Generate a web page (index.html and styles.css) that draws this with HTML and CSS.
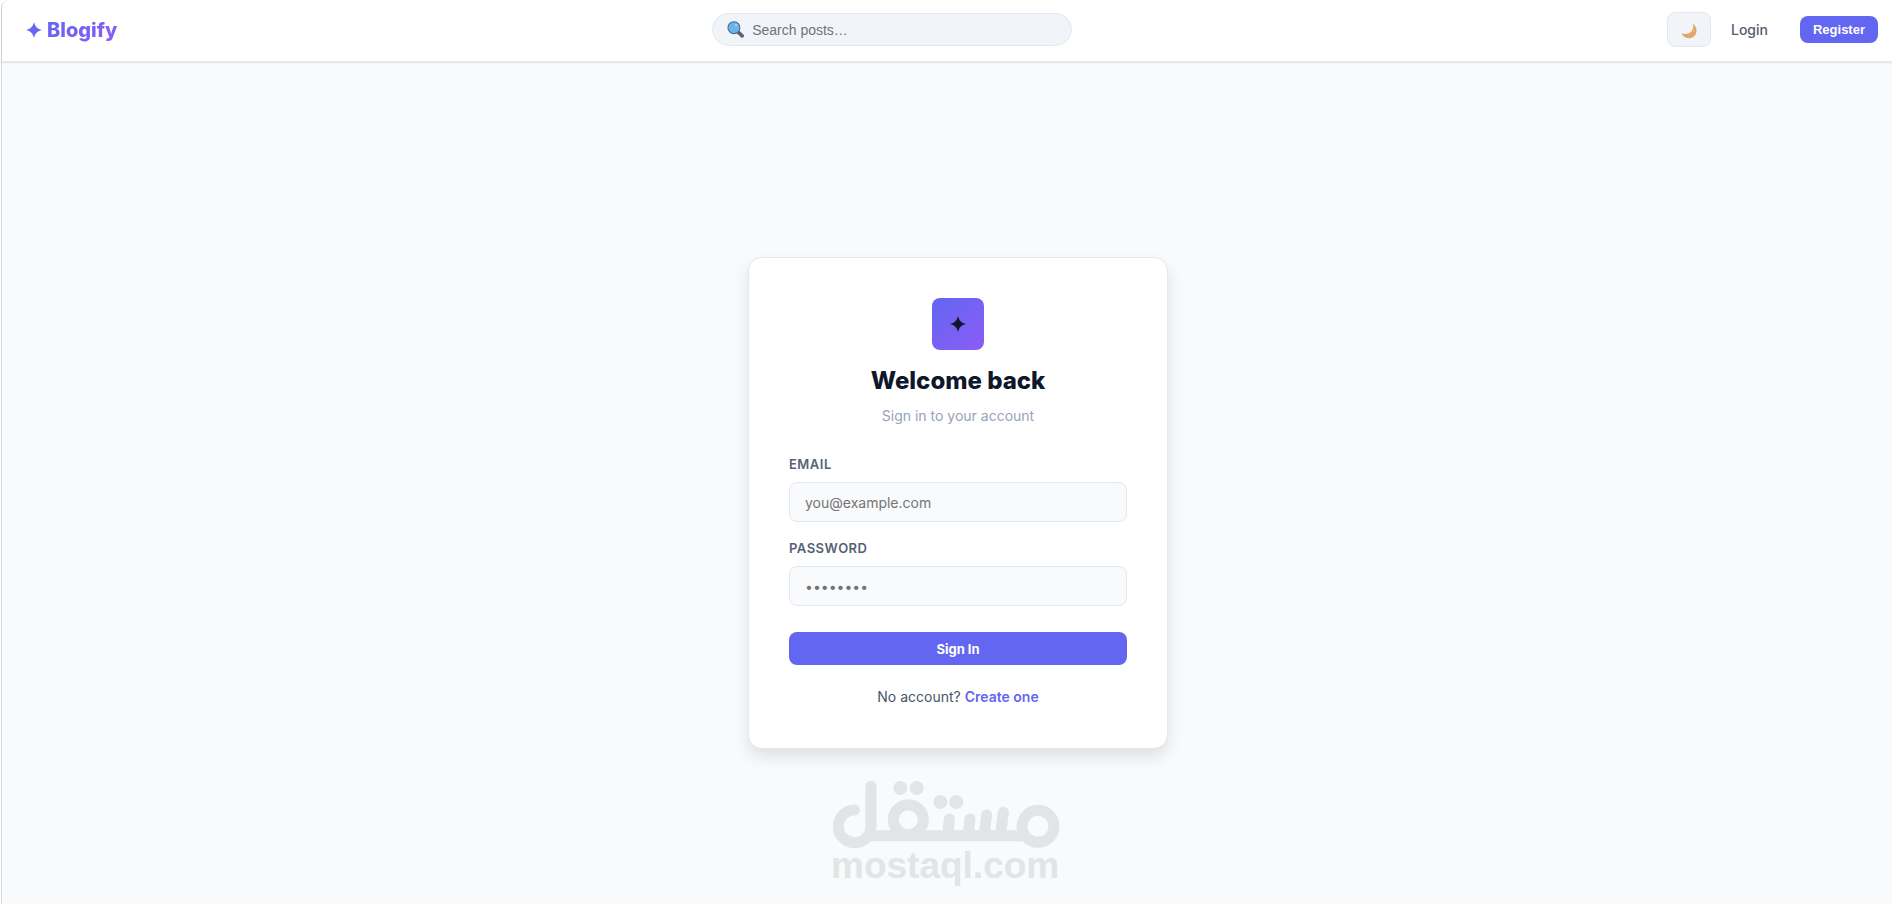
FILE: index.html
```html
<!DOCTYPE html>
<html lang="en">
<head>
<meta charset="utf-8">
<title>Blogify</title>
<link rel="stylesheet" href="styles.css">
</head>
<body>
<div class="page">
  <header class="navbar">
    <a class="brand" href="#">
      <svg class="brand-star" viewBox="0 0 16 16" aria-hidden="true"><path d="M8 0C9 4.500 11.500 7 16 8C11.500 9 9 11.500 8 16C7 11.500 4.500 9 0 8C4.500 7 7 4.500 8 0Z"/></svg>
      <span class="brand-name">Blogify</span>
    </a>
    <label class="search">
      <svg class="search-icon" viewBox="0 0 16 16" aria-hidden="true">
        <path d="M10 10L14.300 14" stroke="#626071" stroke-width="3.400" stroke-linecap="round"/>
        <circle cx="6.500" cy="6.300" r="5.600" fill="#68b4ec" stroke="#4c6791" stroke-width="1"/>
        <circle cx="8.600" cy="3.800" r="1" fill="#b4e0ff"/>
      </svg>
      <input class="search-input" type="search" placeholder="Search posts…" aria-label="Search posts">
    </label>
    <nav class="actions">
      <button class="theme-toggle" type="button" aria-label="Toggle theme">
        <svg class="moon" viewBox="0 0 16 16" aria-hidden="true"><path d="M11.800 .5C16.200 3.500 16.700 9.500 13.500 13C9.500 17 2.800 15.600 .5 10.200C4.500 11.700 8.500 11 10.700 8C12.300 5.700 12.500 3 11.800 .5Z" fill="#e5a66c"/><circle cx="12.800" cy="8" r=".8" fill="#f3c898"/><circle cx="9.500" cy="12" r=".7" fill="#d99556"/></svg>
      </button>
      <a class="login" href="#">Login</a>
      <button class="register" type="button">Register</button>
    </nav>
  </header>
  <main class="content">
    <form class="card">
      <div class="badge">
        <svg class="badge-star" viewBox="0 0 16 16" aria-hidden="true"><path d="M8 0C9 4.500 11.500 7 16 8C11.500 9 9 11.500 8 16C7 11.500 4.500 9 0 8C4.500 7 7 4.500 8 0Z"/></svg>
      </div>
      <h1 class="title">Welcome back</h1>
      <p class="subtitle">Sign in to your account</p>
      <label class="label" for="email">Email</label>
      <input class="field" id="email" type="email" placeholder="you@example.com">
      <label class="label" for="password">Password</label>
      <input class="field" id="password" type="password" placeholder="••••••••">
      <button class="submit" type="button">Sign In</button>
      <p class="signup">No account? <a class="signup-link" href="#">Create one</a></p>
    </form>
  </main>
  <svg class="watermark" viewBox="0 0 690 330" role="img" aria-label="mostaql.com">
    <g transform="translate(-31 -27)">
      <g class="mark-lines">
        <path d="M101 120A49 49 0 1 0 151 169V49"/>
        <path class="mark-base" d="M146 197H612"/>
        <circle cx="652" cy="169" r="48"/>
        <circle cx="263" cy="149" r="45"/>
        <path d="M382 190L386 147M443 190L448 147M491 190L498 135M540 190L548 127"/>
      </g>
      <g class="mark-dots">
        <circle cx="239" cy="54" r="21"/><circle cx="288" cy="54" r="21"/>
        <circle cx="359" cy="96" r="21"/><circle cx="407" cy="96" r="21"/>
      </g>
      <text class="mark-text" x="31" y="324">mostaql.com</text>
    </g>
  </svg>
</div>
</body>
</html>
```
FILE: styles.css
```css
* { box-sizing: border-box; }
body {
  margin: 0;
  background: #fff;
  color: #0f172a;
  font-family: Inter, "Liberation Sans", sans-serif;
  font-size: 14px;
}
a { text-decoration: none; }
.page {
  position: relative;
  display: flex;
  flex-direction: column;
  min-height: 100vh;
  margin-left: 1px;
  border-left: 1px solid #d3d6da;
  border-top-left-radius: 8px;
  background: #f8fafc;
}
.navbar {
  display: flex;
  align-items: center;
  justify-content: space-between;
  height: 62px;
  padding: 0 14px 2px 24px;
  background: #fff;
  border-bottom: 1px solid #e2e8f0;
  border-top-left-radius: 8px;
  box-shadow: 0 1px 2px rgba(0, 0, 0, 0.1);
}
.brand { display: flex; align-items: center; gap: 5px; }
.brand-star { width: 16px; height: 16px; fill: #6667f2; }
.brand-name {
  font-size: 20px;
  line-height: 24px;
  font-weight: 800;
  background: linear-gradient(135deg, #6366f1, #8b5cf6);
  background-clip: text;
  color: transparent;
}
.search {
  display: flex;
  align-items: center;
  gap: 8px;
  width: 360px;
  height: 33px;
  padding: 0 15px 0 14px;
  background: #f1f5f9;
  border: 1px solid #e2e8f0;
  border-radius: 17px;
}
.search-icon { width: 17px; height: 17px; fill: none; }
.search-input {
  flex: 1;
  min-width: 0;
  padding: 0;
  border: 0;
  outline: 0;
  background: transparent;
  font: 14px "Liberation Sans", sans-serif;
}
.search-input::placeholder { color: #70717e; }
.actions { display: flex; align-items: center; }
.theme-toggle {
  display: flex;
  align-items: center;
  justify-content: center;
  width: 44px;
  height: 35px;
  padding: 3px 0 0;
  background: #f1f5f9;
  border: 1px solid #e2e8f0;
  border-radius: 8px;
}
.moon { width: 16px; height: 16px; }
.login {
  padding: 0 32px 0 20px;
  color: #565c70;
  font-weight: 500;
}
.register {
  height: 27px;
  padding: 0 13px;
  border: 0;
  border-radius: 8px;
  background: #6366f1;
  color: #fff;
  font: bold 13px "Liberation Sans", sans-serif;
}
.content {
  flex: 1;
  display: flex;
  align-items: center;
  justify-content: center;
  padding: 40px 0 0 22px;
}
.card {
  display: flex;
  flex-direction: column;
  width: 420px;
  padding: 40px;
  background: #fff;
  border: 1px solid #e2e8f0;
  border-radius: 14px;
  box-shadow: 0 8px 16px rgba(0, 0, 0, 0.1);
}
.badge {
  display: flex;
  align-items: center;
  justify-content: center;
  align-self: center;
  width: 52px;
  height: 52px;
  border-radius: 8px;
  background: linear-gradient(135deg, #6366f1, #8b5cf6);
}
.badge-star { width: 16px; height: 16px; fill: #0f172a; }
.title {
  margin: 15px 0 7px;
  text-align: center;
  font-size: 24px;
  line-height: 32px;
  font-weight: 800;
}
.subtitle {
  margin: 0 0 26px;
  text-align: center;
  line-height: 24px;
  color: #94a3b8;
}
.label {
  margin-bottom: 8px;
  font-size: 13px;
  line-height: 20px;
  font-weight: 600;
  letter-spacing: 0.5px;
  text-transform: uppercase;
  color: #566276;
}
.field {
  width: 100%;
  height: 40px;
  margin-bottom: 16px;
  padding: 0 15px;
  border: 1px solid #e2e8f0;
  border-radius: 8px;
  background: #f8fafc;
  color: #0f172a;
  font: 14px Inter, sans-serif;
}
.field::placeholder { color: #757575; }
.submit {
  height: 33px;
  margin: 10px 0 20px;
  border: 0;
  border-radius: 8px;
  background: #6366f1;
  color: #fff;
  font: 700 13px Inter, sans-serif;
}
.signup {
  margin: 0;
  text-align: center;
  line-height: 23px;
  color: #475569;
}
.signup-link { color: #6366f1; font-weight: 600; }
.watermark {
  position: absolute;
  left: calc(50% - 116px);
  bottom: 15px;
  width: 230px;
  height: 110px;
  pointer-events: none;
}
.mark-lines { fill: none; stroke: #e2e4e6; stroke-width: 33px; stroke-linecap: round; }
.mark-base { stroke-linecap: butt; }
.mark-dots { fill: #e2e4e6; }
.mark-text { fill: #e2e4e6; font: bold 111px "Liberation Sans", sans-serif; }
```
